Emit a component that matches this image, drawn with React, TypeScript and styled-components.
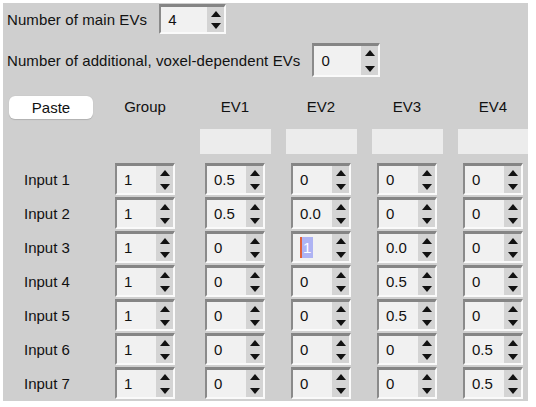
import styled, { createGlobalStyle } from "styled-components";

const GlobalStyle = createGlobalStyle`
  body {
    margin: 0;
    background: #ffffff;
    font-family: "Liberation Sans", Arial, sans-serif;
    color: #111111;
  }
`;

const Panel = styled.div`
  margin: 3px 0 0 3px;
  width: 525px;
  height: 398px;
  background: #cfcfcf;
  overflow: hidden;
  font-size: 15px;
`;

const SettingRow = styled.div<{ $top: number; $h: number }>`
  display: flex;
  align-items: center;
  gap: 12px;
  height: ${(p) => p.$h}px;
  margin-top: ${(p) => p.$top}px;
  padding-left: 4px;
  letter-spacing: 0.1px;
`;

const Grid = styled.div`
  display: grid;
  grid-template-columns: 99px 90px repeat(4, 86px);
  grid-template-rows: 26px 39px repeat(7, 32px);
  row-gap: 2px;
  margin-top: 17px;
  align-items: center;
`;

const HeaderCell = styled.div<{ $shift?: number }>`
  text-align: center;
  height: 26px;
  line-height: 26px;
  margin-right: ${(p) => p.$shift ?? 0}px;
`;

const GroupCell = styled.div`
  display: flex;
  justify-content: center;
  margin-right: 4px;
`;

const Cell = styled.div`
  display: flex;
  justify-content: center;
`;

const FieldCell = styled(Cell)`
  align-self: start;
  padding-top: 7px;
`;

const PasteButton = styled.button`
  justify-self: start;
  margin-left: 6px;
  width: 84px;
  height: 23px;
  border: none;
  border-radius: 6px;
  background: #ffffff;
  font-family: inherit;
  font-size: 15px;
  color: #111111;
  padding: 0;
  box-shadow: 0 0.5px 1px rgba(0, 0, 0, 0.15);
`;

const NameField = styled.div`
  width: 71px;
  height: 25px;
  background: #ececec;
`;

const RowLabel = styled.div`
  padding-left: 21px;
`;

const Spin = styled.div<{ $w: number; $h: number }>`
  display: flex;
  width: ${(p) => p.$w}px;
  height: ${(p) => p.$h}px;
  box-sizing: border-box;
  border-top: 3px solid #858585;
  border-left: 2px solid #8a8a8a;
  border-right: 2px solid #fafafa;
  border-bottom: 2px solid #fafafa;
  letter-spacing: 0;
`;

const SpinField = styled.div`
  flex: 1;
  display: flex;
  align-items: center;
  padding-left: 7px;
  background: #f1f1f1;
`;

const Selected = styled.span`
  position: relative;
  display: inline-block;
  width: 13px;
  height: 21px;
  line-height: 21px;
  box-sizing: border-box;
  padding-left: 3px;
  background: #aeb3f3;
  color: #ffffff;
  &::before {
    content: "";
    position: absolute;
    left: 0;
    top: 0;
    bottom: 0;
    width: 2px;
    background: #e0603a;
  }
`;

const Arrows = styled.div`
  width: 17px;
  background: #d4d4d4;
  display: flex;
  flex-direction: column;
  justify-content: space-between;
  align-items: center;
  padding: 4px 0 3px;
`;

const Arrow = ({ down }: { down?: boolean }) => (
  <svg width="10" height="6" viewBox="0 0 10 6">
    <path d={down ? "M0 0 H10 L5 6 Z" : "M0 6 H10 L5 0 Z"} fill="#111" />
  </svg>
);

interface SpinBoxProps {
  value: string;
  width?: number;
  height?: number;
  selected?: boolean;
}

const SpinBox = ({ value, width = 60, height = 32, selected }: SpinBoxProps) => (
  <Spin $w={width} $h={height}>
    <SpinField>{selected ? <Selected>{value}</Selected> : value}</SpinField>
    <Arrows>
      <Arrow />
      <Arrow down />
    </Arrows>
  </Spin>
);

const rows = [
  ["1", "0.5", "0", "0", "0"],
  ["1", "0.5", "0.0", "0", "0"],
  ["1", "0", "1", "0.0", "0"],
  ["1", "0", "0", "0.5", "0"],
  ["1", "0", "0", "0.5", "0"],
  ["1", "0", "0", "0", "0.5"],
  ["1", "0", "0", "0", "0.5"],
];

const evs = ["EV1", "EV2", "EV3", "EV4"];

const App = () => (
  <>
    <GlobalStyle />
    <Panel>
      <SettingRow $top={1} $h={30}>
        <span>Number of main EVs</span>
        <SpinBox value="4" width={67} height={30} />
      </SettingRow>
      <SettingRow $top={9} $h={34}>
        <span>Number of additional, voxel-dependent EVs</span>
        <SpinBox value="0" width={68} height={34} />
      </SettingRow>
      <Grid>
        <PasteButton>Paste</PasteButton>
        <HeaderCell $shift={4}>Group</HeaderCell>
        {evs.map((ev) => (
          <HeaderCell key={ev}>{ev}</HeaderCell>
        ))}
        <div />
        <div />
        {evs.map((ev) => (
          <FieldCell key={ev}>
            <NameField />
          </FieldCell>
        ))}
        {rows.map((row, i) => [
          <RowLabel key={`l${i}`}>Input {i + 1}</RowLabel>,
          <GroupCell key={`g${i}`}>
            <SpinBox value={row[0]} />
          </GroupCell>,
          ...row.slice(1).map((v, j) => (
            <Cell key={`c${i}-${j}`}>
              <SpinBox value={v} selected={i === 2 && j === 1} />
            </Cell>
          )),
        ])}
      </Grid>
    </Panel>
  </>
);

export default App;
